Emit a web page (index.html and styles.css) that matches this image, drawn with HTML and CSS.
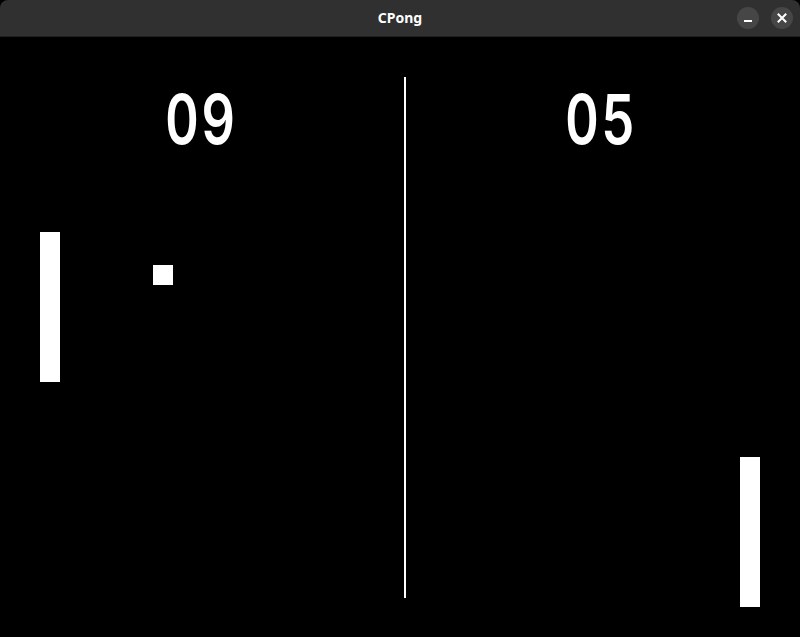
FILE: index.html
```html
<!DOCTYPE html>
<html lang="en">
<head>
<meta charset="utf-8">
<title>CPong</title>
<link rel="stylesheet" href="styles.css">
</head>
<body>
<div class="window">
  <header class="titlebar">
    <span class="title">CPong</span>
    <div class="controls">
      <button class="ctl" aria-label="Minimize">
        <svg width="10" height="10" viewBox="0 0 10 10"><rect x="1" y="7" width="8" height="2" fill="#ffffff"/></svg>
      </button>
      <button class="ctl" aria-label="Close">
        <svg width="10" height="10" viewBox="0 0 10 10"><path d="M1.5 1.5 L8.5 8.5 M8.5 1.5 L1.5 8.5" stroke="#ffffff" stroke-width="2" stroke-linecap="square"/></svg>
      </button>
    </div>
  </header>
  <main class="game">
    <div class="scores">
      <div class="score">09</div>
      <div class="score">05</div>
    </div>
    <div class="net"></div>
    <div class="paddle paddle-left"></div>
    <div class="ball"></div>
    <div class="paddle paddle-right"></div>
  </main>
</div>
</body>
</html>
```

FILE: styles.css
```css
html, body {
  margin: 0;
  padding: 0;
  background: #000000;
}
.window {
  width: 800px;
  height: 637px;
  display: flex;
  flex-direction: column;
  overflow: hidden;
}
.titlebar {
  height: 37px;
  flex: 0 0 37px;
  box-sizing: border-box;
  background: #303030;
  border-radius: 8px 8px 0 0;
  border-bottom: 1px solid #1f1f1f;
  display: flex;
  align-items: center;
  justify-content: center;
  position: relative;
}
.title {
  font-family: "Noto Sans", "DejaVu Sans", sans-serif;
  font-weight: 700;
  font-size: 14px;
  color: #ffffff;
  margin-top: -1px;
}
.controls {
  position: absolute;
  right: 7px;
  top: 7px;
  display: flex;
  gap: 12px;
}
.ctl {
  width: 22px;
  height: 22px;
  border-radius: 50%;
  border: 0;
  padding: 0;
  background: #464646;
  display: flex;
  align-items: center;
  justify-content: center;
}
.game {
  position: relative;
  flex: 1;
  background: #000000;
}
.scores {
  display: grid;
  grid-template-columns: 1fr 1fr;
  padding-top: 37px;
}
.score {
  font-family: "Inter", "Roboto", sans-serif;
  font-weight: 600;
  font-size: 69px;
  line-height: 90px;
  font-variant-numeric: tabular-nums;
  color: #ffffff;
  text-align: center;
  letter-spacing: 3px;
  text-indent: 3px;
  transform: scaleX(0.76);
}
.net {
  position: absolute;
  left: 404px;
  top: 40px;
  width: 2px;
  height: 521px;
  background: #ffffff;
}
.paddle {
  position: absolute;
  width: 20px;
  height: 150px;
  background: #ffffff;
}
.paddle-left {
  left: 40px;
  top: 195px;
}
.paddle-right {
  left: 740px;
  top: 420px;
}
.ball {
  position: absolute;
  left: 153px;
  top: 228px;
  width: 20px;
  height: 20px;
  background: #ffffff;
}
```
